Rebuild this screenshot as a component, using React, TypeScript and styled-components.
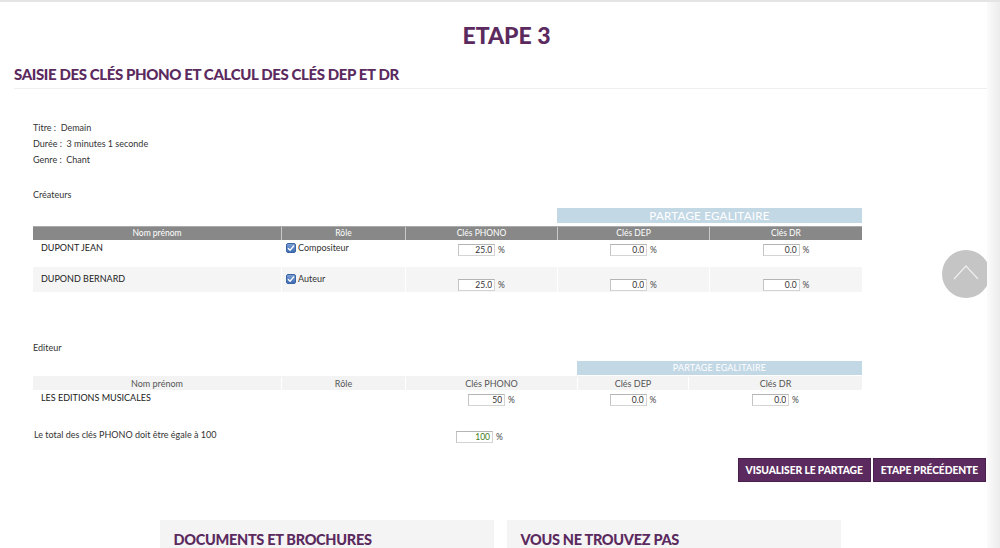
import styled, { createGlobalStyle } from "styled-components";

const purple = "#5b2a5e";

const GlobalStyle = createGlobalStyle`
    html, body {
        margin: 0;
        padding: 0;
        overflow: hidden;
        background: #fff;
        font-family: Lato, "Open Sans", sans-serif;
        color: #333;
    }
    * {
        box-sizing: border-box;
    }
`;

type Row = {
    name: string;
    role?: string;
    phono: string;
    dep: string;
    dr: string;
};

const creators: Row[] = [
    { name: "DUPONT JEAN", role: "Compositeur", phono: "25.0", dep: "0.0", dr: "0.0" },
    { name: "DUPOND BERNARD", role: "Auteur", phono: "25.0", dep: "0.0", dr: "0.0" },
];

const creatorCols = "248px 124px 152px 152px 153px";
const editorCols = "248px 124px 172px 111px 174px";

const Key = ({ value, green }: { value: string; green?: boolean }) => (
    <KeyWrap>
        <KeyInput readOnly value={value} $green={green} />
        <span>%</span>
    </KeyWrap>
);

const Check = () => (
    <CheckBox>
        <svg width="8" height="8" viewBox="0 0 8 8">
            <path d="M1 4.2 L3.1 6.3 L7 1.6" fill="none" stroke="#fff" strokeWidth="1.4" />
        </svg>
    </CheckBox>
);

const App = () => {
    return (
        <>
            <GlobalStyle />
            <TopLine />
            <Page>
                <Title>ETAPE 3</Title>
                <SubTitle>SAISIE DES CLÉS PHONO ET CALCUL DES CLÉS DEP ET DR</SubTitle>

                <Content>
                    <Info>
                        <div>Titre :&nbsp; Demain</div>
                        <div>Durée :&nbsp; 3 minutes 1 seconde</div>
                        <div>Genre :&nbsp; Chant</div>
                    </Info>

                    <Label>Créateurs</Label>
                    <Grid $cols={creatorCols}>
                        <Partage $start={4} $size={11.6} $h={15}>
                            PARTAGE EGALITAIRE
                        </Partage>
                    </Grid>
                    <Head $cols={creatorCols} $dark>
                        <HeadCell>Nom prénom</HeadCell>
                        <HeadCell>Rôle</HeadCell>
                        <HeadCell>Clés PHONO</HeadCell>
                        <HeadCell>Clés DEP</HeadCell>
                        <HeadCell>Clés DR</HeadCell>
                    </Head>
                    {creators.map((c, i) => (
                        <BodyRow key={i} $cols={creatorCols} $alt={i % 2 === 1} $pad={i === 0 ? 2 : 6} $gap={i === 0 ? 2 : 6} $h={i === 0 ? 27 : 25}>
                            <NameCell>{c.name}</NameCell>
                            <RoleCell>
                                <Check />
                                {c.role}
                            </RoleCell>
                            <KeyCell><Key value={c.phono} /></KeyCell>
                            <KeyCell><Key value={c.dep} /></KeyCell>
                            <KeyCell><Key value={c.dr} /></KeyCell>
                        </BodyRow>
                    ))}

                    <Label $top={48}>Editeur</Label>
                    <Grid $cols={editorCols}>
                        <Partage $start={4} $size={9} $h={14}>
                            PARTAGE EGALITAIRE
                        </Partage>
                    </Grid>
                    <Head $cols={editorCols}>
                        <HeadCell>Nom prénom</HeadCell>
                        <HeadCell>Rôle</HeadCell>
                        <HeadCell>Clés PHONO</HeadCell>
                        <HeadCell>Clés DEP</HeadCell>
                        <HeadCell>Clés DR</HeadCell>
                    </Head>
                    <BodyRow $cols={editorCols} $pad={2} $gap={2} $h={30}>
                        <NameCell>LES EDITIONS MUSICALES</NameCell>
                        <RoleCell />
                        <KeyCell><Key value="50" /></KeyCell>
                        <KeyCell><Key value="0.0" /></KeyCell>
                        <KeyCell><Key value="0.0" /></KeyCell>
                    </BodyRow>

                    <Total>
                        <TotalLabel>Le total des clés PHONO doit être égale à 100</TotalLabel>
                        <Key value="100" green />
                    </Total>
                </Content>

                <Actions>
                    <Button>VISUALISER LE PARTAGE</Button>
                    <Button>ETAPE PRÉCÉDENTE</Button>
                </Actions>

                <Cards>
                    <Card>
                        <CardTitle>DOCUMENTS ET BROCHURES</CardTitle>
                    </Card>
                    <Card>
                        <CardTitle>VOUS NE TROUVEZ PAS</CardTitle>
                    </Card>
                </Cards>
            </Page>
            <ScrollTop>
                <svg width="26" height="18" viewBox="0 0 26 18">
                    <path d="M1 16 L13 3 L25 16" fill="none" stroke="#eee" strokeWidth="1.2" />
                </svg>
            </ScrollTop>
            <RightShade />
        </>
    );
};

export default App;

const TopLine = styled.div`
    height: 2px;
    background: #e4e4e4;
`;

const Page = styled.main`
    width: 987px;
    padding: 0 0 0 14px;
`;

const Title = styled.h1`
    margin: 22px 0 0;
    padding-left: 12px;
    text-align: center;
    font-family: Lato, sans-serif;
    font-weight: 900;
    font-size: 23px;
    line-height: 22px;
    color: ${purple};
`;

const SubTitle = styled.h2`
    margin: 21px 0 0;
    padding-bottom: 6px;
    font-family: Lato, sans-serif;
    font-weight: 900;
    font-size: 15px;
    line-height: 15px;
    letter-spacing: -0.38px;
    color: ${purple};
    border-bottom: 1px solid #efefef;
`;

const Content = styled.section`
    padding-left: 19px;
    font-size: 9px;
    color: #333;
`;

const Info = styled.div`
    margin-top: 31px;
    line-height: 16px;
`;

const Label = styled.div<{ $top?: number }>`
    margin-top: ${(p) => p.$top ?? 19}px;
    line-height: 16px;
`;

const Grid = styled.div<{ $cols: string }>`
    display: grid;
    grid-template-columns: ${(p) => p.$cols};
    width: 829px;
    margin-top: 5px;
`;

const Partage = styled.div<{ $start: number; $size: number; $h: number }>`
    grid-column: ${(p) => p.$start} / span 2;
    height: ${(p) => p.$h}px;
    background: #c3d8e5;
    color: #fff;
    font-size: ${(p) => p.$size}px;
    line-height: ${(p) => p.$h}px;
    text-align: center;
    letter-spacing: 0.02em;
`;

const Head = styled.div<{ $cols: string; $dark?: boolean }>`
    display: grid;
    grid-template-columns: ${(p) => p.$cols};
    width: 829px;
    margin-top: ${(p) => (p.$dark ? 3 : 1)}px;
    height: 14px;
    background: ${(p) => (p.$dark ? "#888" : "#f3f3f3")};
    color: ${(p) => (p.$dark ? "#fff" : "#555")};
    border-top: 1px solid ${(p) => (p.$dark ? "#aaa" : "#f3f3f3")};
    font-size: ${(p) => (p.$dark ? 8.5 : 9)}px;
    line-height: 13px;

    & > div + div {
        border-left: 1px solid ${(p) => (p.$dark ? "#c9c9c9" : "#fff")};
    }
`;

const HeadCell = styled.div`
    text-align: center;
`;

const BodyRow = styled.div<{ $cols: string; $alt?: boolean; $pad: number; $gap: number; $h: number }>`
    display: grid;
    grid-template-columns: ${(p) => p.$cols};
    width: 829px;
    height: ${(p) => p.$h}px;
    background: ${(p) => (p.$alt ? "#f5f5f5" : "#fff")};

    & > div {
        padding-top: ${(p) => p.$pad}px;
    }
    & > div + div {
        border-left: 1px solid #fff;
    }
    ${"" /* inputs sit a little below the text */}
    & input {
        margin-top: ${(p) => p.$gap - 2}px;
    }
`;

const NameCell = styled.div`
    padding-left: 8px;
    line-height: 11px;
    color: #222;
`;

const RoleCell = styled.div`
    display: flex;
    align-items: flex-start;
    gap: 2px;
    padding-left: 4px;
    line-height: 11px;
    color: #333;
`;

const CheckBox = styled.span`
    display: flex;
    align-items: center;
    justify-content: center;
    width: 10px;
    height: 10px;
    margin-top: 1px;
    border-radius: 2px;
    background: linear-gradient(#7c9fd4, #3f6db5);
    border: 1px solid #3a63a3;
`;

const KeyCell = styled.div`
    display: flex;
    align-items: flex-start;
    justify-content: center;
`;

const KeyWrap = styled.div`
    display: flex;
    align-items: flex-end;
    gap: 3px;
    margin-top: 2px;
    font-size: 8.5px;
    line-height: 11px;
    color: #444;
`;

const KeyInput = styled.input<{ $green?: boolean }>`
    width: 37px;
    height: 12px;
    margin: 0;
    padding: 0 2px 0 0;
    border: 1px solid #d4d4d4;
    border-top-color: #b4b4b4;
    border-left-color: #c4c4c4;
    background: #fff;
    text-align: right;
    font-family: Lato, sans-serif;
    font-size: 8.5px;
    color: ${(p) => (p.$green ? "#3f7d20" : "#333")};
    outline: none;
`;

const Total = styled.div`
    display: flex;
    align-items: flex-start;
    margin-top: 9px;
    padding-left: 1px;
`;

const TotalLabel = styled.div`
    width: 422px;
    line-height: 11px;
`;

const Actions = styled.div`
    display: flex;
    justify-content: flex-end;
    gap: 2px;
    margin-top: 15px;
    padding-right: 1px;
`;

const Button = styled.button`
    height: 24px;
    padding: 0 7px;
    border: 1px solid #4a1f4d;
    background: ${purple};
    color: #fff;
    font-family: Lato, sans-serif;
    font-weight: 900;
    font-size: 10.3px;
    letter-spacing: -0.1px;
    cursor: pointer;
`;

const Cards = styled.div`
    display: flex;
    justify-content: center;
    gap: 13px;
    margin: 38px 0 0 -14px;
    width: 1000px;
`;

const Card = styled.div`
    width: 334px;
    height: 60px;
    padding: 12px 14px;
    background: #f4f4f4;
`;

const CardTitle = styled.h3`
    margin: 0;
    font-family: Lato, sans-serif;
    font-weight: 900;
    font-size: 14.5px;
    line-height: 15px;
    letter-spacing: -0.3px;
    color: ${purple};
`;

const ScrollTop = styled.div`
    position: fixed;
    left: 942px;
    top: 250px;
    width: 48px;
    height: 48px;
    border-radius: 50%;
    background: #c5c5c5;
    display: flex;
    align-items: center;
    justify-content: center;
    padding-bottom: 4px;
`;

const RightShade = styled.div`
    position: fixed;
    top: 2px;
    right: 0;
    width: 13px;
    height: 100%;
    background: linear-gradient(to right, #fbfbfb, #ececec);
`;
